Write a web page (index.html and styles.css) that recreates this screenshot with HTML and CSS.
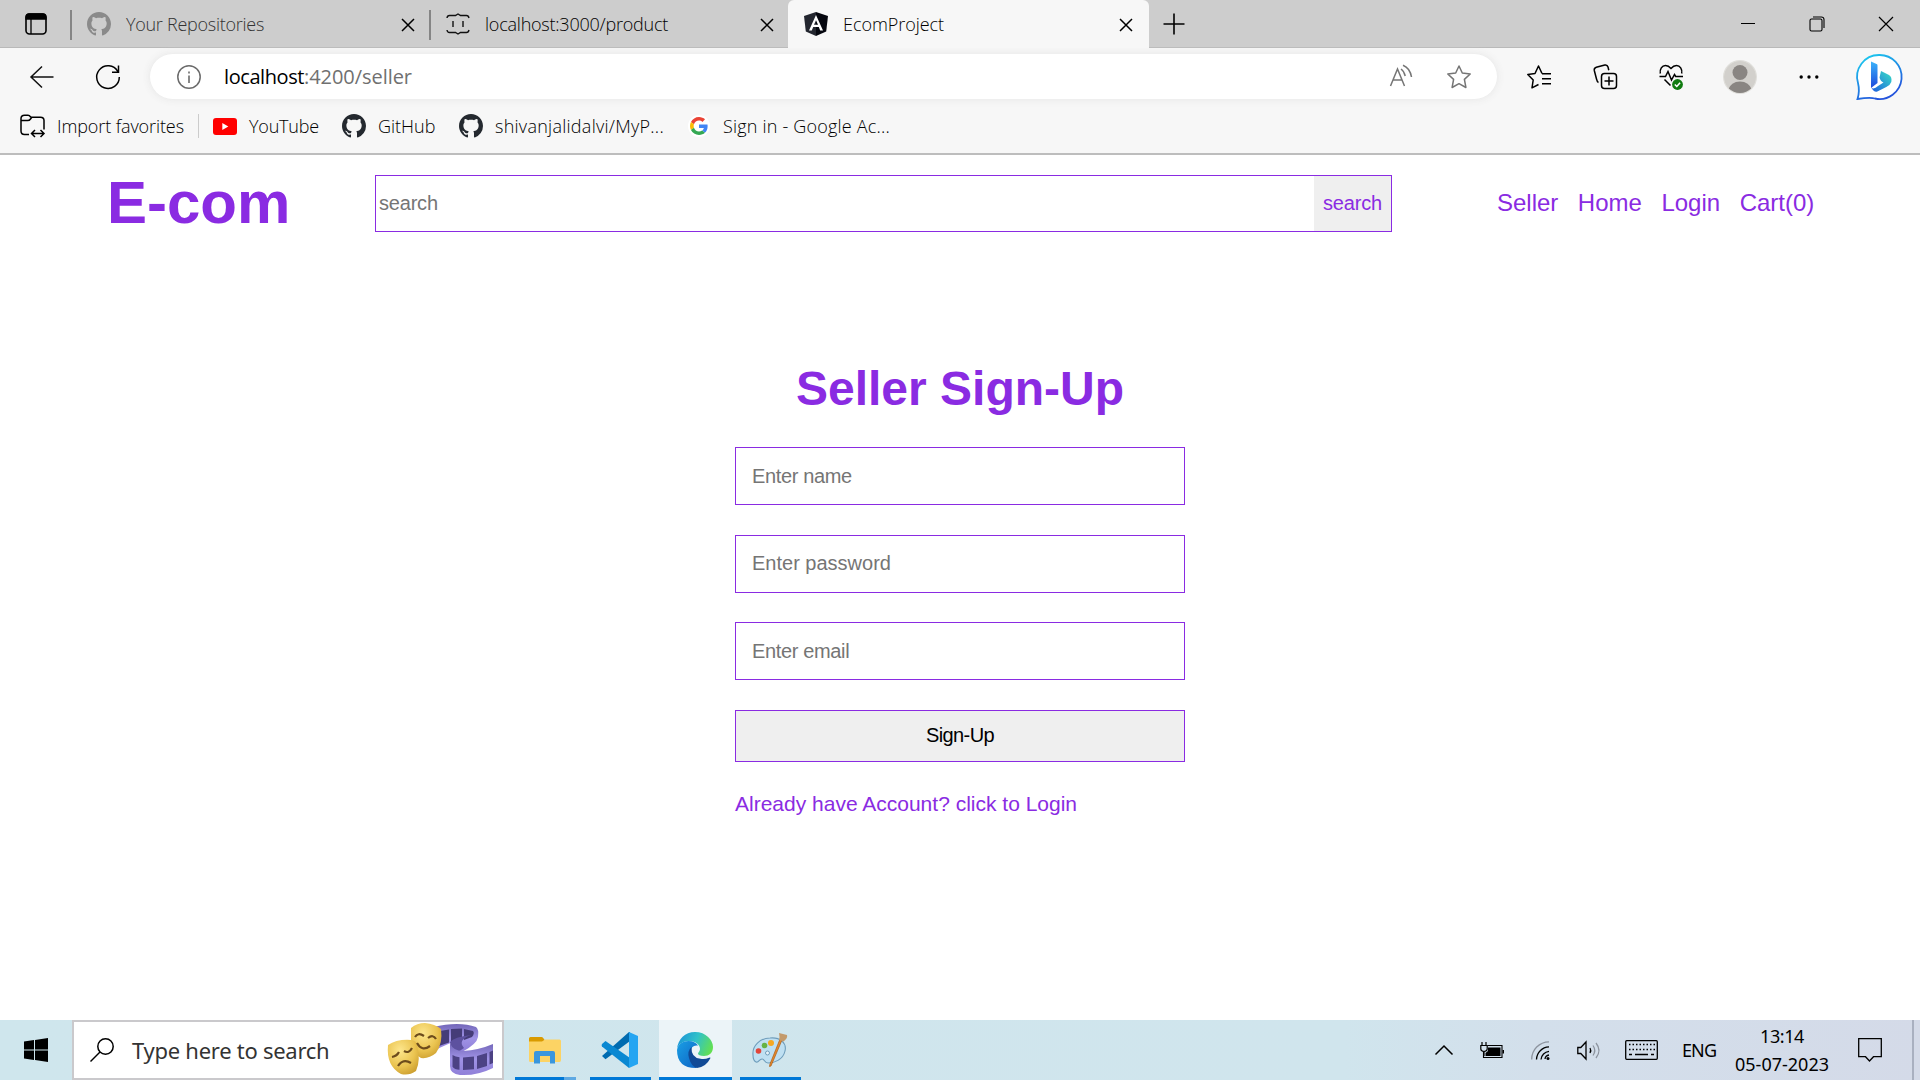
FILE: index.html
```html
<!DOCTYPE html>
<html lang="en">
<head>
<meta charset="utf-8">
<title>EcomProject</title>
<link rel="stylesheet" href="styles.css">
</head>
<body>
<svg class="defs" aria-hidden="true">
  <defs>
    <symbol id="github" viewBox="0 0 16 16"><path d="M8 0C3.58 0 0 3.58 0 8c0 3.54 2.29 6.53 5.47 7.59.4.07.55-.17.55-.38 0-.19-.01-.82-.01-1.49-2.01.37-2.53-.49-2.69-.94-.09-.23-.48-.94-.82-1.13-.28-.15-.68-.52-.01-.53.63-.01 1.08.58 1.23.82.72 1.21 1.87.87 2.33.66.07-.52.28-.87.51-1.07-1.78-.2-3.64-.89-3.64-3.95 0-.87.31-1.59.82-2.15-.08-.2-.36-1.02.08-2.12 0 0 .67-.21 2.2.82.64-.18 1.32-.27 2-.27.68 0 1.36.09 2 .27 1.53-1.04 2.2-.82 2.2-.82.44 1.1.16 1.92.08 2.12.51.56.82 1.27.82 2.15 0 3.07-1.87 3.75-3.65 3.95.29.25.54.73.54 1.48 0 1.07-.01 1.93-.01 2.2 0 .21.15.46.55.38A8.013 8.013 0 0016 8c0-4.42-3.58-8-8-8z"/></symbol>
    <symbol id="close" viewBox="0 0 14 14"><path d="M1 1l12 12M13 1L1 13" fill="none" stroke="#000" stroke-width="1.5"/></symbol>
  </defs>
</svg>

<header class="browser">
  <div class="tabstrip">
    <svg class="workspace" viewBox="0 0 22 22"><rect x="1" y="1" width="20" height="20" rx="3.5" fill="none" stroke="#000" stroke-width="1.6"/><path d="M1 6V4a3 3 0 013-3h14a3 3 0 013 3v2zM6 6v15" stroke="#000" stroke-width="1.3"/></svg>
    <div class="tab tab-first">
      <svg class="fav fav-grey"><use href="#github"/></svg>
      <span class="tab-title t-repos">Your Repositories</span>
      <svg class="x"><use href="#close"/></svg>
    </div>
    <div class="tab tab-second">
      <svg class="fav" viewBox="0 0 24 24" fill="none" stroke="#111" stroke-width="1.4"><path d="M1 6q.3-2.500 2.500-2.500h6L12 2l2.500 1.500h6Q22.500 3.500 23 6M1 18q.3 2.500 2.500 2.500h6L12 22l2.500-1.500h6q2 0 2.500-2.500M7 9v6M17 9v6"/></svg>
      <span class="tab-title t-local">localhost:3000/product</span>
      <svg class="x"><use href="#close"/></svg>
    </div>
    <div class="tab tab-active">
      <svg class="fav" viewBox="0 0 24 24"><path d="M12 0L0 4l1.800 15.500L12 24z" fill="#23262f"/><path d="M12 0l12 4-1.800 15.500L12 24z" fill="#05070f"/><path d="M12 3L5 18.500h2.800l1.400-3.600h5.600l1.400 3.600H19zm0 5.200l2 4.600h-4z" fill="#fff"/></svg>
      <span class="tab-title t-ecom">EcomProject</span>
      <svg class="x"><use href="#close"/></svg>
    </div>
    <svg class="newtab" viewBox="0 0 22 22"><path d="M11 .5v21M.5 11h21" stroke="#000" stroke-width="1.600"/></svg>
    <div class="window-controls">
      <svg viewBox="0 0 16 16"><path d="M1 7.500h14" stroke="#000" stroke-width="1"/></svg>
      <svg viewBox="0 0 16 16" fill="none" stroke="#000" stroke-width="1.100"><rect x="1" y="3" width="12" height="12" rx="1.500"/><path d="M4 1h8.500A2.500 2.500 0 0115 3.500V12"/></svg>
      <svg viewBox="0 0 16 16"><path d="M1 1l14 14M15 1L1 15" stroke="#000" stroke-width="1.200"/></svg>
    </div>
  </div>

  <div class="toolbar">
    <svg class="back" viewBox="0 0 24 24" fill="none" stroke="#111" stroke-width="1.500"><path d="M23.500 12H.8M12 1.500L1 12l11 10.500"/></svg>
    <svg class="reload" viewBox="0 0 24 24" fill="none" stroke="#000" stroke-width="1.500"><path d="M21.800 6.500A11.300 11.300 0 1023.300 12M22.500.5v6.800H16"/></svg>
    <div class="address">
      <svg class="info" viewBox="0 0 24 24" fill="none" stroke="#6b6b6b"><circle cx="12" cy="12" r="11.200" stroke-width="1.500"/><path d="M12 10.500V18M12 6.500v2" stroke-width="1.600"/></svg>
      <span class="url"><span class="host">localhost</span><span class="path">:4200/seller</span></span>
      <svg class="read" viewBox="0 0 24 24" fill="none" stroke="#757575" stroke-width="1.500"><path d="M1.500 21L8.500 4l7 17M4 15h9M12 4q3 2 4.200 7M14 .2Q21 3 22.500 12"/></svg>
      <svg class="star" viewBox="0 0 24 24" fill="none" stroke="#757575" stroke-width="1.500" stroke-linejoin="round"><path d="M12 1l3.300 7 7.900 1-5.800 5.400 1.500 8.100L12 18.700l-6.900 3.800 1.500-8.100L.8 9l7.900-1z"/></svg>
    </div>
    <div class="actions">
      <svg class="a-fav" viewBox="0 0 24 24" fill="none" stroke="#000" stroke-width="1.500" stroke-linejoin="round"><path d="M11.500 19.500L5 22.800 6.200 15 .8 9.500l7.200-1L11.500 1 15 8.500M15 8.800h9M15 13.800h9M15 18.800h9"/></svg>
      <svg class="a-col" viewBox="0 0 24 25" fill="none" stroke="#000" stroke-width="1.500"><rect x="8.500" y="9.500" width="15" height="15" rx="3"/><path d="M16 12.500v9M11.500 17h9M5.500 18.500Q4.200 18 3.500 15L1.300 6.500q-.5-2.500 2-3.300l8.500-2.200q2.500-.5 3.200 2l.8 3.200"/></svg>
      <svg class="a-heart" viewBox="0 0 24 26" fill="none" stroke="#000" stroke-width="1.500"><path d="M1.300 9.500C.5 5 3 1.600 6.500 1.600q3 0 5.500 2.800Q14.500 1.600 17.500 1.600c3.500 0 6 3.400 5.200 7.900M.5 12.500h6l2.500-5 3.500 8.500 3-5.500 1.200 2H24M5.500 15.500l6 6"/><circle cx="18.500" cy="20.500" r="5.400" fill="#107c10" stroke="none"/><path d="M15.800 20.500l2 2 3.300-3.700" stroke="#fff"/></svg>
      <svg class="avatar" viewBox="0 0 34 34"><defs><clipPath id="av"><circle cx="17" cy="17" r="16"/></clipPath></defs><circle cx="17" cy="17" r="17" fill="#dfdeda"/><g clip-path="url(#av)"><circle cx="17" cy="17" r="16" fill="#d2d0cc"/><circle cx="17" cy="12.500" r="7.500" fill="#898582"/><path d="M5 30q3-8.500 12-8.500T29 30l-4 5H9z" fill="#898582"/></g></svg>
      <svg class="a-dots" viewBox="0 0 20 6"><circle cx="2.200" cy="3" r="1.700"/><circle cx="10" cy="3" r="1.700"/><circle cx="17.800" cy="3" r="1.700"/></svg>
      <svg class="bing" viewBox="0 0 46 46"><defs><linearGradient id="bo" x1="0" y1="0" x2=".5" y2="1"><stop offset="0" stop-color="#1bd4f0"/><stop offset="1" stop-color="#2454dc"/></linearGradient><linearGradient id="b1" x1="0" y1="0" x2="0" y2="1"><stop offset="0" stop-color="#3bb3fa"/><stop offset="1" stop-color="#1b48dc"/></linearGradient><linearGradient id="b2" x1="0" y1="1" x2="1" y2="0"><stop offset="0" stop-color="#1e5de0"/><stop offset="1" stop-color="#37dfc6"/></linearGradient></defs><path d="M23 1a22 22 0 11-4 43.500q-5-1.500-17.500.5Q4 37 2 29A21.800 21.800 0 0123 1z" fill="#fff" stroke="url(#bo)" stroke-width="1.800"/><path d="M15 7.500l5.500 2.500c1 .4 1 1 1 2v17l-6.500 5z" fill="url(#b1)"/><path d="M25 17l8 4q3.300 2 2.300 7-1 3-5 5l-9 4.500q-3.300 1-5.800-3.500 3 1.500 6.500-2l5.500-3.500q-3-1-4-5z" fill="url(#b2)"/></svg>
    </div>
  </div>

  <nav class="favorites">
    <svg class="import" viewBox="0 0 25 24" fill="none" stroke="#000" stroke-width="1.500"><path d="M9 20.500H4.500Q1 20.500 1 17V4.500Q1 1.200 4.500 1.200H8q1.500 0 2.300 1.500L11 3.200h9.500Q24 3.200 24 6.500v9M1 6.500h6.500q2 0 3-1.500L12 3M11.500 19.500h12.500M15 16l-3.500 3.500L15 23M20.500 16l3.500 3.500-3.500 3.500"/></svg>
    <span class="fav-label f-import">Import favorites</span>
    <span class="fav-sep"></span>
    <svg class="yt" viewBox="0 0 24 17"><rect width="24" height="17" rx="3" fill="#f00"/><path d="M9.300 5l6 3.500-6 3.500z" fill="#fff"/></svg>
    <span class="fav-label f-yt">YouTube</span>
    <svg class="gh"><use href="#github"/></svg>
    <span class="fav-label f-gh">GitHub</span>
    <svg class="gh"><use href="#github"/></svg>
    <span class="fav-label f-shiv">shivanjalidalvi/MyP...</span>
    <span class="google"><svg viewBox="0 0 48 48"><path fill="#EA4335" d="M24 9.500c3.540 0 6.710 1.220 9.210 3.600l6.850-6.850C35.900 2.380 30.470 0 24 0 14.620 0 6.510 5.380 2.560 13.220l7.980 6.190C12.430 13.720 17.740 9.500 24 9.500z"/><path fill="#4285F4" d="M46.980 24.550c0-1.570-.15-3.090-.38-4.550H24v9.020h12.940c-.58 2.960-2.260 5.480-4.780 7.180l7.730 6c4.510-4.180 7.090-10.360 7.090-17.650z"/><path fill="#FBBC05" d="M10.530 28.590c-.48-1.450-.76-2.990-.76-4.590s.27-3.140.76-4.590l-7.980-6.190C.92 16.460 0 20.120 0 24c0 3.880.92 7.540 2.560 10.780l7.970-6.190z"/><path fill="#34A853" d="M24 48c6.480 0 11.930-2.130 15.890-5.810l-7.730-6c-2.150 1.450-4.920 2.300-8.160 2.300-6.260 0-11.570-4.220-13.470-9.910l-7.980 6.190C6.510 42.620 14.620 48 24 48z"/></svg></span>
    <span class="fav-label f-goog">Sign in - Google Ac...</span>
  </nav>
</header>

<main class="page">
  <div class="site-header">
    <h1 class="logo">E-com</h1>
    <form class="search"><input class="search-input" type="text" placeholder="search"><button class="search-btn" type="button">search</button></form>
    <ul class="menu"><li>Seller</li><li>Home</li><li>Login</li><li>Cart(0)</li></ul>
  </div>
  <section class="signup">
    <h2 class="title">Seller Sign-Up</h2>
    <input class="field field-tight" type="text" placeholder="Enter name">
    <input class="field" type="text" placeholder="Enter password">
    <input class="field field-tight" type="text" placeholder="Enter email">
    <button class="submit" type="button">Sign-Up</button>
    <a class="login-link">Already have Account? click to Login</a>
  </section>
</main>

<footer class="taskbar">
  <div class="start"><svg viewBox="0 0 24 24"><path d="M0 3.500L10 2v9.500H0zM11 1.900L24 0v11.500H11zM0 12.500h10V22L0 20.500zM11 12.500h13V24l-13-1.900z"/></svg></div>
  <div class="win-search">
    <svg class="mag" viewBox="0 0 24 24" fill="none" stroke="#000" stroke-width="1.500"><circle cx="15.500" cy="8.500" r="7.700"/><path d="M10 14L.5 23.500"/></svg>
    <span class="win-search-text">Type here to search</span>
    <svg class="theatre" viewBox="0 0 108 54">
      <defs><linearGradient id="fl" x1="0" y1="0" x2="0" y2="1"><stop offset="0" stop-color="#7266b8"/><stop offset=".5" stop-color="#a093e6"/><stop offset="1" stop-color="#8f7fd8"/></linearGradient><radialGradient id="mk" cx=".4" cy=".3" r=".8"><stop offset="0" stop-color="#fde68c"/><stop offset=".6" stop-color="#eac34f"/><stop offset="1" stop-color="#c99a2c"/></radialGradient></defs>
      <path d="M46 4Q72-2 89 4q3 2 2 10-1 7-16 15L64 24q-1-5 13-10L50 26z" fill="url(#fl)"/>
      <path d="M53 8l9-1.500v13L52 23zM64 6l11-.5v10L64 19zM77 6l9 2q2 2-1 6l-8 3z" fill="#453c78"/>
      <path d="M63 19q4-5 21-7-14 5-7 13l-12 8z" fill="#5d519f"/>
      <path d="M63 20q3 8 13 8 16-1 30-7v24Q90 53 73 52q-10-1-10-9z" fill="url(#fl)"/>
      <path d="M65.500 32q3 2 7 2.300v12.500q-5 0-7-3zM76 34.500l11-1v12.800l-11 .7zM90 33l10-3v13l-10 3zM102.500 29l3.500-1.500v12.500l-3.500 1.500z" fill="#4c4284"/>
      <path d="M24 5Q30 0 38 0q10 1 16 6 2 14-5 24-7 6-15 5Q24 31 24 17z" fill="url(#mk)"/>
      <path d="M1 22q9-6 23-5 6 1 6 5 4 15-1 26-7 5-15 3Q-1 43 1 22z" fill="url(#mk)"/>
      <path d="M28 14q3-5 9-1M41 15q5-4 8 1M30 20q5 9 13 3M5 34q5-1 7-5M17 28q5 3 8-3M11 43q5-8 13-3" fill="none" stroke="#6d4c1c" stroke-width="2.200"/>
    </svg>
  </div>
  <div class="apps">
    <div class="app app-explorer"><svg viewBox="0 0 36 36"><path d="M2 6.500Q2 5 3.500 5h11q1 0 1.700 1L18 8.500l-2 3H2z" fill="#d99a00"/><path d="M2 9.500h13l3-2h14.500Q34 7.500 34 9v19q0 2-1.500 2h-29Q2 30 2 28.500z" fill="#fcd364"/><path d="M7 31.500V21q0-2 2-2h17q2 0 2 2v10.500h-5V24H13v7.500z" fill="#3a96dd"/></svg><i></i></div>
    <div class="app app-code"><svg viewBox="0 0 36 36"><path d="M0 24l3.500 3.300L28 9V0h-1z" fill="#006bb0"/><path d="M3.500 9L0 12q-.8 1 0 2.500L27 36l1-10z" fill="#0a88d2"/><path d="M27 0l9 4v28l-9 4z" fill="#25a5f2"/></svg><i></i></div>
    <div class="app app-edge"><svg viewBox="0 0 36 36"><defs><linearGradient id="e1" x1="0" y1=".3" x2="1" y2=".6"><stop offset="0" stop-color="#1b94d8"/><stop offset=".5" stop-color="#31c2c8"/><stop offset="1" stop-color="#63e051"/></linearGradient><linearGradient id="e2" x1="0" y1="0" x2="1" y2="1"><stop offset="0" stop-color="#1a9fe4"/><stop offset="1" stop-color="#0d62c4"/></linearGradient></defs><path d="M0 17C1 7 8 0 18 0c11 0 18 8 18 15 0 6-4 9-9 9-4 0-6-1-6-2.500 0-1 2-2 2-4.500 0-4-4-8-11-8C6 9 1.500 12 0 17z" fill="url(#e1)"/><path d="M0 18C1 12 6 9 11.500 9q6.500 0 9.500 4.500-7-1-7.500 6.500 0 8 8 12.500L19 36Q0 36 0 18z" fill="url(#e2)"/><path d="M14.500 15Q10 19 12 26q2 8 8 10 9-1 13.500-10 0-1-1.500-.3-4 1.800-8.500 1Q14 26 14.500 15z" fill="#114a96"/></svg><i></i></div>
    <div class="app app-paint"><svg viewBox="0 0 36 36"><path d="M1 23C0 14 8 6 18 6c10-1 17 5 15 13-2 9-11 12-17 12-4 0-3-4-6-4-3 0-3 4-6 3-2-1-3-4-3-7z" fill="#bfe0f2" stroke="#6f9dbb" stroke-width="1.100"/><circle cx="15.500" cy="21" r="2" fill="#e8f4fa" stroke="#6f9dbb"/><circle cx="6.500" cy="19" r="2.800" fill="#e2453a"/><circle cx="12.500" cy="13.500" r="2.800" fill="#66b345"/><circle cx="19" cy="11" r="3" fill="#f6a821"/><path d="M28 7l2 1-11 26-1.500.5.3-2z" fill="#e8892b" stroke="#a85b16" stroke-width=".7"/><path d="M27 1l8 2q1 3-3.500 6.500L27 8q1-3 0-7z" fill="#c39a6b"/></svg><i></i></div>
  </div>
  <div class="tray">
    <svg class="t-chev" viewBox="0 0 18 10" fill="none" stroke="#000" stroke-width="1.500"><path d="M.5 9.500L9 1l8.500 8.500"/></svg>
    <svg class="t-bat" viewBox="0 0 24 17"><path d="M7.500 3.500H22V15.500H3.500V10" fill="none" stroke="#000" stroke-width="1.100"/><path d="M8 5.500h12.500V14H5.500v-3L8 9zM22.500 8H24v3.500h-1.500z"/><path d="M2 0v4M6 0v4M.8 3.500h6.400V7q0 2-3.200 2.500Q.8 9 .8 7zM4 9v5" fill="none" stroke="#000" stroke-width="1.200"/></svg>
    <svg class="t-wifi" viewBox="0 0 19 19" fill="none" stroke="#000" stroke-width="1.300"><path d="M.7 18.500A17.500 17.500 0 0118 .8" stroke="#8d949f"/><path d="M5.500 18.500A13 13 0 0118 5.800M10 18.500a9 9 0 018-8.200M14 18q.5-3.500 4-4"/><circle cx="17" cy="17.500" r="1.500" fill="#000" stroke="none"/></svg>
    <svg class="t-vol" viewBox="0 0 24 19" fill="none" stroke="#000" stroke-width="1.300"><path d="M.8 6.500h3L9 1v17L3.800 12.500h-3zM13 7q1.500 2.500 0 5"/><path d="M16 4.500q3.500 5 0 10M19 2q6 7.500 0 15" stroke="#8d949f"/></svg>
    <svg class="t-key" viewBox="0 0 33 20" fill="none" stroke="#000" stroke-width="1.300"><rect x=".7" y=".7" width="31.600" height="18.600" rx="1"/><path d="M4 4.500h26M4 9.500h26" stroke-dasharray="1.500 2"/><path d="M4 14.500h3M10 14.500h13M26 14.500h3"/></svg>
    <span class="lang">ENG</span>
    <div class="clock"><span class="time">13:14</span><span class="date">05-07-2023</span></div>
    <svg class="t-note" viewBox="0 0 24 24" fill="none" stroke="#000" stroke-width="1.300"><path d="M.7.7h22.600v18H15.500L11.500 23l-4-4.300H.7z"/></svg>
    <span class="peek"></span>
  </div>
</footer>
</body>
</html>
```
FILE: styles.css
```css
* { box-sizing: border-box; }
body { margin: 0; width: 1920px; height: 1080px; overflow: hidden; display: flex; flex-direction: column; background: #fff; font-family: "Liberation Sans", Arial, sans-serif; }
svg { display: block; flex: none; overflow: visible; }
.defs { width: 0; height: 0; position: absolute; }

/* browser chrome */
.browser { height: 155px; flex: none; background: #f7f7f7; border-bottom: 2px solid #bdbdbd; font-family: "Open Sans", "Noto Sans", sans-serif; white-space: nowrap; }
.tabstrip { height: 48px; display: flex; align-items: center; background: #cdcdcd; box-shadow: inset 0 -1px #b9b9b9; }
.workspace { width: 22px; height: 22px; margin-left: 25px; }
.tab { height: 48px; display: flex; align-items: center; position: relative; }
.tab-first { width: 359px; margin-left: 25px; padding-left: 15px; }
.tab-second { width: 359px; padding-left: 15px; }
.tab-first::before, .tab-second::before { content: ""; position: absolute; left: -2px; top: 10px; width: 2px; height: 30px; background: #858585; }
.tab-active { width: 361px; margin-left: -2px; padding-left: 16px; background: #f7f7f7; border-radius: 6px 6px 0 0; }
.fav { width: 24px; height: 24px; margin-right: 15px; }
.fav-grey { fill: #8a8a8a; }
.tab-title { font-size: 18px; font-weight: 300; color: #000; flex: 1; }
.t-repos { color: #333; letter-spacing: -0.27px; }
.t-local { letter-spacing: -0.23px; }
.t-ecom { letter-spacing: -0.05px; }
.x { width: 14px; height: 14px; margin-top: 2px; margin-right: 16px; }
.newtab { width: 22px; height: 22px; margin-left: 14px; }
.window-controls { display: flex; gap: 53px; margin-left: auto; padding-right: 26px; }
.window-controls svg { width: 16px; height: 16px; }
.toolbar { height: 57px; display: flex; align-items: center; }
.back { width: 24px; height: 24px; margin-left: 30px; }
.reload { width: 24px; height: 24px; margin-left: 42px; }
.address { width: 1347px; height: 45px; margin-left: 30px; padding-left: 27px; border-radius: 23px; background: #fff; box-shadow: 0 0 8px #e4e4e4; display: flex; align-items: center; }
.info { width: 24px; height: 24px; }
.url { margin-left: 23px; font-size: 20px; }
.host { letter-spacing: -0.42px; }
.path { color: #707070; letter-spacing: -0.05px; }
.read { width: 24px; height: 24px; margin-left: auto; }
.star { width: 24px; height: 24px; margin: 0 26px 0 34px; }
.actions { display: flex; align-items: center; }
.a-fav { width: 24px; height: 24px; margin-left: 30px; }
.a-col { width: 24px; height: 25px; margin-left: 42px; }
.a-heart { width: 24px; height: 26px; margin-left: 42px; }
.avatar { width: 34px; height: 34px; margin-left: 40px; }
.a-dots { width: 20px; height: 6px; margin-left: 42px; }
.bing { width: 46px; height: 46px; margin-left: 37px; }
.favorites { height: 42px; display: flex; align-items: center; font-size: 18px; font-weight: 300; }
.import { width: 25px; height: 24px; margin: 0 12px 0 20px; }
.f-import { width: 127px; letter-spacing: -0.1px; }
.fav-sep { width: 1px; height: 24px; background: #ccc; margin: 0 14px; }
.yt { width: 24px; height: 17px; margin-right: 12px; }
.f-yt { width: 69px; letter-spacing: -0.19px; }
.gh { width: 24px; height: 24px; fill: #24292f; margin: 0 12px 0 24px; }
.f-gh { width: 57px; }
.f-shiv { width: 168px; letter-spacing: 0.26px; }
.f-goog { letter-spacing: 0.19px; }
.google { width: 22px; height: 22px; border-radius: 50%; background: #fff; margin: 0 13px 0 25px; padding: 2px; }

/* shop page */
.page { flex: 1; display: flex; flex-direction: column; align-items: center; color: #8a2be2; }
.site-header { width: 100%; height: 96px; display: flex; align-items: center; }
.logo { margin: 0 0 0 107px; width: 268px; font-size: 60px; line-height: 1; }
.search { width: 1017px; height: 57px; border: 1px solid #8a2be2; display: flex; }
.search-input { flex: 1; border: 0; padding: 0 3px; font: 20px "Liberation Sans", Arial, sans-serif; letter-spacing: -0.2px; }
.search-btn { width: 77px; border: 0; padding: 0; background: #efefef; color: #8a2be2; font: 20px "Liberation Sans", Arial, sans-serif; letter-spacing: -0.15px; }
input::placeholder { color: #757575; }
.menu { list-style: none; display: flex; margin: 0 0 0 105px; padding: 0; gap: 19.500px; font-size: 24px; }
.signup { width: 450px; display: flex; flex-direction: column; margin-top: 110px; }
.title { margin: 0 0 31px; text-align: center; font-size: 48px; line-height: 55px; }
.field { height: 58px; margin-bottom: 29.500px; padding: 0 16px; border: 1px solid #8a2be2; font: 20px "Liberation Sans", Arial, sans-serif; }
.field-tight { letter-spacing: -0.35px; }
.submit { height: 52px; padding: 0; border: 1px solid #8a2be2; background: #efefef; color: #000; font: 20px "Liberation Sans", Arial, sans-serif; letter-spacing: -0.6px; }
.login-link { margin-top: 30px; font-size: 21px; line-height: 24px; }

/* taskbar */
.taskbar { height: 60px; flex: none; display: flex; background: linear-gradient(90deg, #cfe6ed 0%, #d0e5ed 70%, #d3dfeb 80%, #d4dae8 100%); font-family: "Noto Sans", "Open Sans", sans-serif; }
.start { width: 72px; padding: 18px 24px; }
.start svg { width: 24px; height: 24px; }
.win-search { width: 432px; display: flex; align-items: center; background: #fff; border: 2px solid #cac9cc; }
.mag { width: 24px; height: 24px; margin-left: 16px; }
.win-search-text { margin-left: 18px; font-size: 22px; letter-spacing: -0.27px; color: #333; }
.theatre { width: 108px; height: 54px; margin-left: auto; margin-right: 7px; }
.apps { display: flex; margin-left: 11px; gap: 7px; }
.app { height: 60px; display: flex; flex-direction: column; align-items: center; justify-content: space-between; padding-top: 12px; }
.app svg { width: 36px; height: 36px; margin-right: 1px; }
.app i { width: 100%; height: 3px; background: #0078d7; }
.app-explorer { width: 61px; margin-right: 7px; }
.app-explorer i { background: linear-gradient(90deg, #0078d7 49px, #5fa9e3 49px); }
.app-code { width: 61px; margin-right: 1px; }
.app-edge { width: 73px; background: #ecf4f8; margin-right: 1px; }
.app-paint { width: 61px; }
.tray { display: flex; align-items: center; margin-left: auto; font-size: 18px; }
.t-chev { width: 18px; height: 10px; }
.t-bat { width: 24px; height: 17px; margin-left: 27px; }
.t-wifi { width: 19px; height: 19px; margin-left: 27px; }
.t-vol { width: 24px; height: 19px; margin-left: 27px; }
.t-key { width: 33px; height: 20px; margin-left: 24px; }
.lang { width: 33px; margin-left: 24px; letter-spacing: -0.9px; }
.clock { width: 96px; margin-left: 19px; display: flex; flex-direction: column; align-items: center; line-height: 28px; }
.time { letter-spacing: -0.4px; }
.t-note { width: 24px; height: 24px; margin-left: 28px; }
.peek { width: 2px; height: 60px; margin: 0 6px 0 30px; background: #a9b0c0; }
```
